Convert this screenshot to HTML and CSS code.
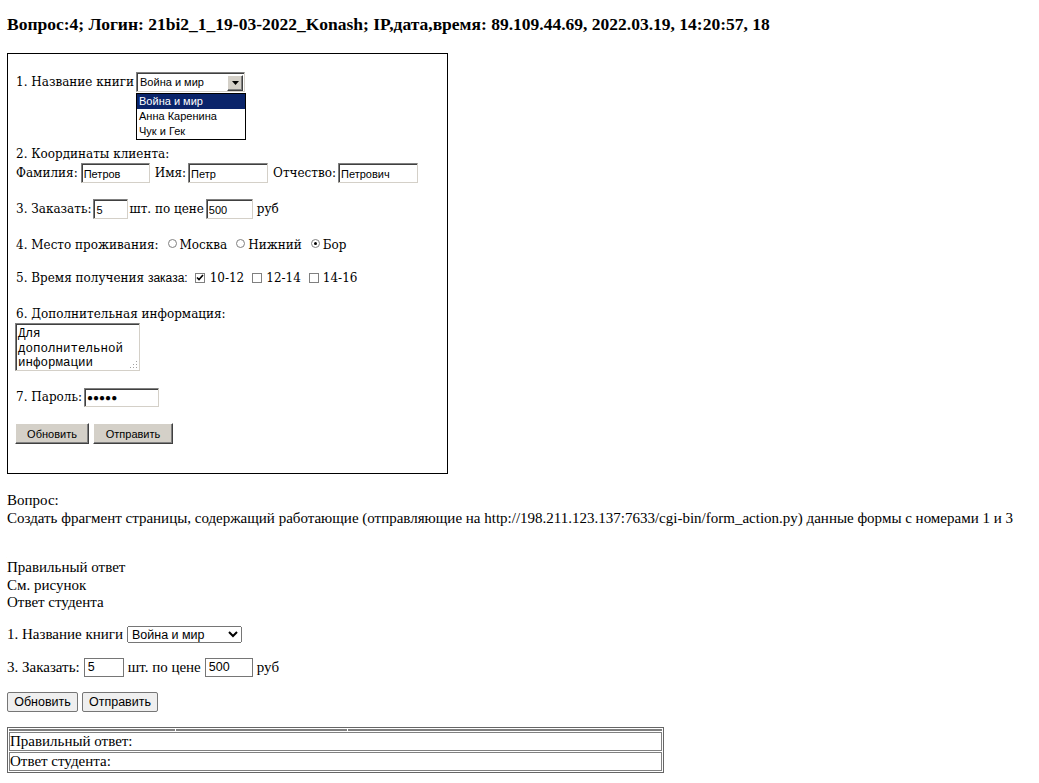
FILE: index.html
```html
<!DOCTYPE html>
<html lang="ru">
<head>
<meta charset="utf-8">
<title>Вопрос 4</title>
<link rel="stylesheet" href="styles.css">
</head>
<body>
<h3 class="title">Вопрос:4; Логин: 21bi2_1_19-03-2022_Konash; IP,дата,время: 89.109.44.69, 2022.03.19, 14:20:57, 18</h3>

<div class="shot">
  <div class="srow r1">
    <span>1. Название книги</span>
    <span class="wsel">
      <span class="wsel-val">Война и мир</span>
      <span class="wsel-btn"><svg width="7" height="4" viewBox="0 0 7 4"><path d="M0 0h7L3.5 4z" fill="#000"/></svg></span>
      <span class="wlist">
        <span class="witem on">Война и мир</span>
        <span class="witem">Анна Каренина</span>
        <span class="witem">Чук и Гек</span>
      </span>
    </span>
  </div>
  <div class="srow r2"><span>2. Координаты клиента:</span></div>
  <div class="srow r3">
    <span>Фамилия:</span><input class="win w69 g3" type="text" value="Петров" readonly>
    <span class="g5">Имя:</span><input class="win w80 g2" type="text" value="Петр" readonly>
    <span class="g5">Отчество:</span><input class="win w80 g2" type="text" value="Петрович" readonly>
  </div>
  <div class="srow r4">
    <span>3. Заказать:</span><input class="win w35 g2" type="text" value="5" readonly>
    <span class="g1">шт. по цене</span><input class="win w47 g2" type="text" value="500" readonly>
    <span class="g4">руб</span>
  </div>
  <div class="srow r5">
    <span>4. Место проживания:</span>
    <span class="wradio g9"></span><span class="g3">Москва</span>
    <span class="wradio g9"></span><span class="g3">Нижний</span>
    <span class="wradio on g9"></span><span class="g3">Бор</span>
  </div>
  <div class="srow r6">
    <span>5. Время получения <span class="sans">заказа:</span></span>
    <span class="wcheck g7"><svg width="8" height="8" viewBox="0 0 8 8"><path d="M1 3.5l2 2 4-4.5" fill="none" stroke="#000" stroke-width="1.6"/></svg></span><span class="g5">10-12</span>
    <span class="wcheck g8"></span><span class="g4">12-14</span>
    <span class="wcheck g8"></span><span class="g4">14-16</span>
  </div>
  <div class="srow r7"><span>6. Дополнительная информация:</span></div>
  <div class="wta-wrap">
    <textarea class="wta" readonly>Для дополнительной информации</textarea>
    <svg class="grip" width="9" height="9" viewBox="0 0 9 9"><g fill="#a0a0a0"><rect x="7" y="1" width="1" height="1"/><rect x="4" y="4" width="1" height="1"/><rect x="7" y="4" width="1" height="1"/><rect x="1" y="7" width="1" height="1"/><rect x="4" y="7" width="1" height="1"/><rect x="7" y="7" width="1" height="1"/></g></svg>
  </div>
  <div class="srow r8">
    <span>7. Пароль:</span><input class="win w75 pwd g2" type="text" value="●●●●●" readonly>
  </div>
  <div class="srow r9">
    <button class="wbtn w74" type="button">Обновить</button>
    <button class="wbtn w80 g4" type="button">Отправить</button>
  </div>
</div>

<div class="question">
  <div>Вопрос:</div>
  <div>Создать фрагмент страницы, содержащий работающие (отправляющие на http://198.211.123.137:7633/cgi-bin/form_action.py) данные формы с номерами 1 и 3</div>
</div>

<div class="answers">
  <div>Правильный ответ</div>
  <div>См. рисунок</div>
  <div>Ответ студента</div>
</div>

<form class="sform" action="http://198.211.123.137:7633/cgi-bin/form_action.py">
  <div class="frow f1">
    <span>1. Название книги</span>
    <select class="nsel" name="book">
      <option>Война и мир</option>
      <option>Анна Каренина</option>
      <option>Чук и Гек</option>
    </select>
  </div>
  <div class="frow f2">
    <span>3. Заказать:</span><input class="nin n40" type="text" name="qty" value="5">
    <span>шт. по цене</span><input class="nin n48" type="text" name="price" value="500">
    <span>руб</span>
  </div>
  <div class="frow f3">
    <button class="nbtn n71" type="reset">Обновить</button>
    <button class="nbtn n76" type="submit">Отправить</button>
  </div>
</form>

<table class="res">
  <tr class="empty"><td class="c1"></td><td class="c2"></td><td></td></tr>
  <tr><td colspan="3">Правильный ответ:</td></tr>
  <tr><td colspan="3">Ответ студента:</td></tr>
</table>
</body>
</html>
```

FILE: styles.css
```css
body {
  margin: 8px 7px;
  font-family: "Liberation Serif", "Times New Roman", serif;
  font-size: 15px;
  color: #000;
  background: #fff;
}

.title {
  margin: 5px 0 18px;
  font-size: 17.5px;
  font-weight: bold;
  line-height: 22px;
}

/* ---------- screenshot of old form ---------- */
.shot {
  position: relative;
  box-sizing: border-box;
  width: 441px;
  height: 421px;
  border: 1px solid #000;
  padding: 18px 0 0 8px;
  font-family: "DejaVu Serif", serif;
  font-size: 12px;
  display: flex;
  flex-direction: column;
  align-items: flex-start;
}

.srow {
  display: flex;
  align-items: center;
  white-space: nowrap;
}
.sans {
  font-family: "Liberation Sans", Arial, sans-serif;
  font-size: 12px;
}
.g1 { margin-left: 1px; }
.g2 { margin-left: 2px; }
.g3 { margin-left: 3px; }
.g4 { margin-left: 4px; }
.g5 { margin-left: 5px; }
.g6 { margin-left: 6px; }
.g7 { margin-left: 7px; }
.g8 { margin-left: 8px; }
.g9 { margin-left: 9px; }

.r1 { height: 20px; }
.r1 > .wsel { margin-left: 2px; }
.r2 { margin-top: 55px; height: 14px; }
.r3 { margin-top: 2px; height: 20px; }
.r4 { margin-top: 16px; height: 20px; }
.r5 { margin-top: 19px; height: 14px; }
.r6 { margin-top: 19px; height: 14px; }
.r7 { margin-top: 22px; height: 14px; }
.r8 { margin-top: 16px; height: 20px; }
.r9 { margin-top: 16px; height: 21px; }

.win {
  box-sizing: border-box;
  height: 20px;
  margin-top: 0;
  margin-bottom: 0;
  margin-right: 0;
  padding: 1px 2px 0;
  border: 1px solid;
  border-color: #808080 #d4d0c8 #d4d0c8 #808080;
  box-shadow: inset 1px 1px 0 #404040;
  background: #fff;
  font-family: "Liberation Sans", Arial, sans-serif;
  font-size: 11px;
  color: #000;
  outline: none;
}
.w35 { width: 35px; }
.w47 { width: 47px; }
.w69 { width: 69px; }
.w75 { width: 75px; }
.w80 { width: 80px; }
.pwd { font-size: 10px; height: 19px; }

.wsel {
  position: relative;
  box-sizing: border-box;
  width: 109px;
  height: 20px;
  border: 1px solid;
  border-color: #808080 #d4d0c8 #d4d0c8 #808080;
  box-shadow: inset 1px 1px 0 #404040;
  background: #fff;
  display: flex;
  align-items: center;
  font-family: "Liberation Sans", Arial, sans-serif;
  font-size: 11px;
}
.wsel-val { flex: 1; padding-left: 3px; }
.wsel-btn {
  box-sizing: border-box;
  width: 16px;
  height: 16px;
  margin-right: 1px;
  margin-top: 1px;
  background: #d4d0c8;
  border: 1px solid;
  border-color: #fff #404040 #404040 #fff;
  box-shadow: inset -1px -1px 0 #808080;
  display: flex;
  align-items: center;
  justify-content: center;
}
.wlist {
  position: absolute;
  left: -1px;
  top: 20px;
  box-sizing: border-box;
  width: 110px;
  border: 1px solid #000;
  background: #fff;
  display: flex;
  flex-direction: column;
}
.witem {
  height: 15px;
  line-height: 15px;
  padding-left: 2px;
}
.witem.on { background: #0a246a; color: #fff; }

.wradio {
  box-sizing: border-box;
  width: 9px;
  height: 9px;
  border-radius: 50%;
  border: 1px solid #808080;
  background: #fff;
  position: relative;
  top: -2px;
}
.wradio.on::after {
  content: "";
  position: absolute;
  left: 2px;
  top: 2px;
  width: 3px;
  height: 3px;
  border-radius: 50%;
  background: #000;
}

.wcheck {
  box-sizing: border-box;
  width: 10px;
  height: 10px;
  border: 1px solid #808080;
  background: #fff;
  display: flex;
  align-items: center;
  justify-content: center;
}

.wta-wrap {
  position: relative;
  margin: 2px 0 0 -1px;
  width: 125px;
  height: 48px;
}
.wta {
  display: block;
  box-sizing: border-box;
  width: 125px;
  height: 48px;
  margin: 0;
  padding: 3px 2px 0;
  border: 1px solid;
  border-color: #808080 #d4d0c8 #d4d0c8 #808080;
  box-shadow: inset 1px 1px 0 #404040;
  font-family: "Liberation Mono", "Courier New", monospace;
  font-size: 12.5px;
  line-height: 14.5px;
  overflow: hidden;
  resize: none;
  outline: none;
  color: #000;
}
.grip {
  position: absolute;
  right: 2px;
  bottom: 2px;
}

.wbtn {
  box-sizing: border-box;
  height: 21px;
  margin-top: 0;
  margin-bottom: 0;
  padding: 0;
  background: #d4d0c8;
  border: 1px solid;
  border-color: #fff #404040 #404040 #fff;
  box-shadow: inset -1px -1px 0 #808080;
  font-family: "Liberation Sans", Arial, sans-serif;
  font-size: 11px;
  color: #000;
}
.r9 > .wbtn:first-child { margin-left: -1px; }
.w74 { width: 74px; }

/* ---------- question text ---------- */
.question {
  margin-top: 18px;
  line-height: 17.5px;
}
.answers {
  margin-top: 32px;
  line-height: 17.5px;
}

/* ---------- student form ---------- */
.sform { margin: 0; }
.frow {
  display: flex;
  align-items: center;
  gap: 4px;
  white-space: nowrap;
}
.f1 { margin-top: 14px; height: 18px; }
.f2 { margin-top: 14px; height: 19px; }
.f3 { margin-top: 15px; height: 20px; }

.nsel {
  box-sizing: border-box;
  width: 115px;
  height: 17px;
  margin: 0;
  font-family: "Liberation Sans", Arial, sans-serif;
  font-size: 12.5px;
}
.nin {
  box-sizing: border-box;
  height: 19px;
  margin: 0;
  padding: 1px 3px;
  border: 1px solid #767676;
  font-family: "Liberation Sans", Arial, sans-serif;
  font-size: 12.5px;
}
.n40 { width: 40px; }
.n48 { width: 48px; }
.nbtn {
  box-sizing: border-box;
  height: 20px;
  margin: 0;
  padding: 0 4px;
  background: #efefef;
  border: 1px solid #767676;
  border-radius: 2px;
  font-family: "Liberation Sans", Arial, sans-serif;
  font-size: 12.5px;
  color: #000;
}
.n71 { width: 71px; }
.n76 { width: 76px; }

/* ---------- result table ---------- */
.res {
  margin-top: 15px;
  width: 657px;
  border: 1px solid #666;
  border-spacing: 1px;
}
.res td {
  border: 1px solid #808080;
  padding: 0 1px 0 0;
  line-height: 17px;
}
.res .empty td { padding: 0; height: 0; line-height: 0; }
.res .c1 { width: 164px; }
.res .c2 { width: 169px; }
```
